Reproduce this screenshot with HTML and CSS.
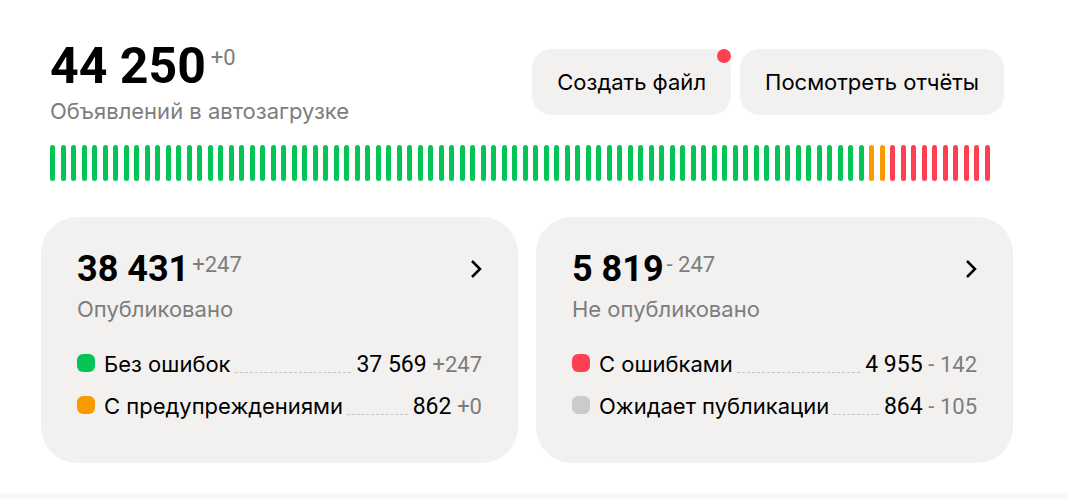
FILE: index.html
```
<!DOCTYPE html>
<html lang="ru">
<head>
    <meta charset="UTF-8">
    <meta name="viewport" content="width=device-width, initial-scale=1.0">
    <title>Автозагрузка</title>
    <link rel="stylesheet" href="styles.css">
</head>
<body>
    <main class="summary">
        <!-- Total and actions -->
        <header class="summary-header">
            <div>
                <div class="total total-main">
                    <span class="total-value">44 250</span>
                    <span class="delta">+0</span>
                </div>
                <div class="caption">Объявлений в автозагрузке</div>
            </div>
            <div class="actions">
                <button type="button" class="btn">Создать файл<span class="btn-badge"></span></button>
                <button type="button" class="btn">Посмотреть отчёты</button>
            </div>
        </header>

        <!-- Status bar, filled by script.js -->
        <div class="ticks" id="ticks"></div>

        <!-- Cards -->
        <div class="cards">
            <section class="card">
                <div class="card-header">
                    <div class="total">
                        <span class="card-value">38 431</span>
                        <span class="delta">+247</span>
                    </div>
                    <a href="#published" class="card-link" aria-label="Опубликовано">
                        <svg width="12" height="20" viewBox="0 0 12 20"><path d="M2 2l8 8-8 8"/></svg>
                    </a>
                </div>
                <div class="caption">Опубликовано</div>
                <dl class="stats">
                    <div class="stat">
                        <dt class="stat-name"><span class="marker green"></span>Без ошибок</dt>
                        <dd class="stat-value">37 569 <span class="stat-delta">+247</span></dd>
                    </div>
                    <div class="stat">
                        <dt class="stat-name"><span class="marker orange"></span>С предупреждениями</dt>
                        <dd class="stat-value">862 <span class="stat-delta">+0</span></dd>
                    </div>
                </dl>
            </section>

            <section class="card">
                <div class="card-header">
                    <div class="total">
                        <span class="card-value">5 819</span>
                        <span class="delta">- 247</span>
                    </div>
                    <a href="#unpublished" class="card-link" aria-label="Не опубликовано">
                        <svg width="12" height="20" viewBox="0 0 12 20"><path d="M2 2l8 8-8 8"/></svg>
                    </a>
                </div>
                <div class="caption">Не опубликовано</div>
                <dl class="stats">
                    <div class="stat">
                        <dt class="stat-name"><span class="marker red"></span>С ошибками</dt>
                        <dd class="stat-value">4 955 <span class="stat-delta">- 142</span></dd>
                    </div>
                    <div class="stat">
                        <dt class="stat-name"><span class="marker gray"></span>Ожидает публикации</dt>
                        <dd class="stat-value">864 <span class="stat-delta">- 105</span></dd>
                    </div>
                </dl>
            </section>
        </div>
    </main>
    <script src="script.js"></script>
</body>
</html>
```
FILE: styles.css
```
* {
    margin: 0;
    padding: 0;
    box-sizing: border-box;
}

:root {
    --bg-page: #f7f7f7;
    --bg-card: #f2f1f0;
    --text-primary: #000000;
    --text-secondary: #7d7d7d;
    --green: #04c456;
    --orange: #fb9a00;
    --red: #ff4053;
    --gray: #cbcbcb;
}

body {
    background-color: var(--bg-page);
    color: var(--text-primary);
    font-family: Inter, sans-serif;
    font-size: 22px;
    line-height: 32px;
}

.summary {
    background-color: #ffffff;
    padding: 40px 54px 30px 41px;
}

/* Header */
.summary-header {
    display: flex;
    justify-content: space-between;
    align-items: flex-start;
    padding: 0 9px;
}

.total {
    display: flex;
    align-items: flex-start;
    gap: 3px;
}

.total-main {
    gap: 5px;
    margin-bottom: 3px;
}

.total-main .delta {
    line-height: 36px;
}

.total-value,
.card-value {
    font-family: Roboto, sans-serif;
    font-weight: 700;
}

.total-value {
    font-size: 50px;
    line-height: 52px;
}

.delta,
.caption,
.stat-delta {
    color: var(--text-secondary);
}

.delta,
.stat-delta {
    font-family: Roboto, sans-serif;
    font-size: 22px;
}

.actions {
    display: flex;
    gap: 9px;
    margin-top: 9px;
}

.btn {
    position: relative;
    height: 66px;
    padding: 0 25px;
    border: none;
    border-radius: 20px;
    background-color: var(--bg-card);
    color: inherit;
    font: inherit;
    cursor: pointer;
}

.btn-badge {
    position: absolute;
    top: 0;
    right: 0;
    width: 14px;
    height: 14px;
    border-radius: 50%;
    background-color: var(--red);
}

/* Status bar */
.ticks {
    display: flex;
    justify-content: space-between;
    height: 36px;
    margin: 18px 23px 36px 9px;
}

.tick {
    width: 5px;
    border-radius: 3px;
}

.green {
    background-color: var(--green);
}

.orange {
    background-color: var(--orange);
}

.red {
    background-color: var(--red);
}

.gray {
    background-color: var(--gray);
}

/* Cards */
.cards {
    display: grid;
    grid-template-columns: 1fr 1fr;
    gap: 18px;
}

.card {
    padding: 32px 36px 39px;
    border-radius: 36px;
    background-color: var(--bg-card);
}

.card-header {
    display: flex;
    justify-content: space-between;
    align-items: center;
    margin-bottom: 4px;
}

.card-value {
    font-size: 36px;
    line-height: 40px;
}

.card-link {
    display: flex;
}

.card-link path {
    fill: none;
    stroke: var(--text-primary);
    stroke-width: 2.5;
}

.stats {
    display: grid;
    gap: 8px;
    margin-top: 23px;
}

.stat {
    display: flex;
    white-space: nowrap;
}

.stat-name {
    flex: 1;
    display: flex;
    align-items: flex-start;
}

/* Dashed leader between name and value */
.stat-name::after {
    content: "";
    flex: 1;
    height: 24px;
    margin: 0 5px 0 4px;
    border-bottom: 1px dashed #c4c4c4;
}

.stat-value {
    font-family: Roboto, sans-serif;
    font-size: 23px;
    line-height: 34px;
}

.marker {
    width: 18px;
    height: 18px;
    margin: 6px 9px 0 0;
    border-radius: 6px;
}
```
FILE: script.js
```
const segments = [
    { color: 'green', count: 78 },
    { color: 'orange', count: 2 },
    { color: 'red', count: 10 }
];

const ticks = document.getElementById('ticks');

segments.forEach(({ color, count }) => {
    for (let i = 0; i < count; i++) {
        const tick = document.createElement('span');
        tick.className = `tick ${color}`;
        ticks.appendChild(tick);
    }
});
```
